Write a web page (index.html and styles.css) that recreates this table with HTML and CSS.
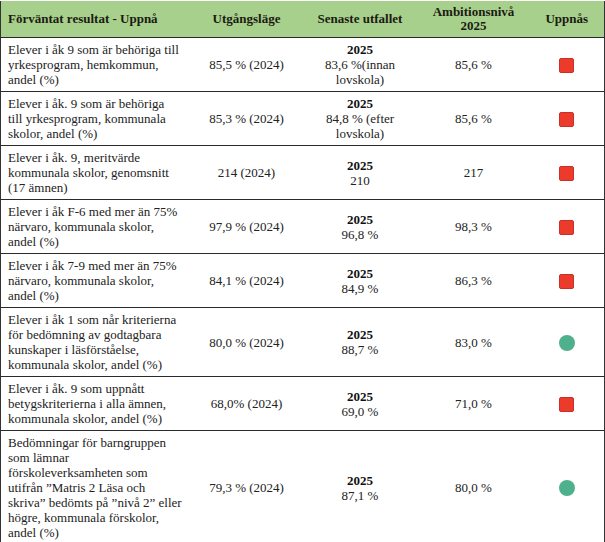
FILE: index.html
```html
<!DOCTYPE html>
<html lang="sv">
<head>
<meta charset="utf-8">
<link rel="stylesheet" href="styles.css">
</head>
<body>
<table class="results">
  <colgroup>
    <col class="c-goal"><col class="c-base"><col class="c-latest"><col class="c-amb"><col class="c-status">
  </colgroup>
  <thead>
    <tr>
      <th class="left">Förväntat resultat - Uppnå</th>
      <th>Utgångsläge</th>
      <th>Senaste utfallet</th>
      <th>Ambitionsnivå<br>2025</th>
      <th>Uppnås</th>
    </tr>
  </thead>
  <tbody>
    <tr>
      <td class="left">Elever i åk 9 som är behöriga till<br>yrkesprogram, hemkommun,<br>andel (%)</td>
      <td>85,5 % (2024)</td>
      <td><b>2025</b><br>83,6 %(innan<br>lovskola)</td>
      <td>85,6 %</td>
      <td><span class="sq"></span></td>
    </tr>
    <tr>
      <td class="left">Elever i åk. 9 som är behöriga<br>till yrkesprogram, kommunala<br>skolor, andel (%)</td>
      <td>85,3 % (2024)</td>
      <td><b>2025</b><br>84,8 % (efter<br>lovskola)</td>
      <td>85,6 %</td>
      <td><span class="sq"></span></td>
    </tr>
    <tr>
      <td class="left">Elever i åk. 9, meritvärde<br>kommunala skolor, genomsnitt<br>(17 ämnen)</td>
      <td>214 (2024)</td>
      <td><b>2025</b><br>210</td>
      <td>217</td>
      <td><span class="sq"></span></td>
    </tr>
    <tr>
      <td class="left">Elever i åk F-6 med mer än 75%<br>närvaro, kommunala skolor,<br>andel (%)</td>
      <td>97,9 % (2024)</td>
      <td><b>2025</b><br>96,8 %</td>
      <td>98,3 %</td>
      <td><span class="sq"></span></td>
    </tr>
    <tr>
      <td class="left">Elever i åk 7-9 med mer än 75%<br>närvaro, kommunala skolor,<br>andel (%)</td>
      <td>84,1 % (2024)</td>
      <td><b>2025</b><br>84,9 %</td>
      <td>86,3 %</td>
      <td><span class="sq"></span></td>
    </tr>
    <tr>
      <td class="left">Elever i åk 1 som når kriterierna<br>för bedömning av godtagbara<br>kunskaper i läsförståelse,<br>kommunala skolor, andel (%)</td>
      <td>80,0 % (2024)</td>
      <td><b>2025</b><br>88,7 %</td>
      <td>83,0 %</td>
      <td><span class="dot"></span></td>
    </tr>
    <tr>
      <td class="left">Elever i åk. 9 som uppnått<br>betygskriterierna i alla ämnen,<br>kommunala skolor, andel (%)</td>
      <td>68,0% (2024)</td>
      <td><b>2025</b><br>69,0 %</td>
      <td>71,0 %</td>
      <td><span class="sq"></span></td>
    </tr>
    <tr>
      <td class="left">Bedömningar för barngruppen<br>som lämnar<br>förskoleverksamheten som<br>utifrån ”Matris 2 Läsa och<br>skriva” bedömts på ”nivå 2” eller<br>högre, kommunala förskolor,<br>andel (%)</td>
      <td>79,3 % (2024)</td>
      <td><b>2025</b><br>87,1 %</td>
      <td>80,0 %</td>
      <td><span class="dot"></span></td>
    </tr>
  </tbody>
</table>
</body>
</html>
```
FILE: styles.css
```css
html, body {
  margin: 0;
  padding: 0;
  background: #ffffff;
}
body {
  font-family: "Liberation Serif", "DejaVu Serif", serif;
  font-size: 13px;
  color: #222222;
}
.results {
  width: 604px;
  border-collapse: collapse;
  table-layout: fixed;
  border-left: 1px solid #333333;
  border-right: 1px solid #333333;
  border-top: 1px solid #9a9a9a;
}
.c-goal { width: 190px; }
.c-base { width: 112px; }
.c-latest { width: 115px; }
.c-amb { width: 112px; }
.c-status { width: 75px; }

.results th {
  background: #a8d08d;
  font-weight: bold;
  color: #1b1b12;
  line-height: 14px;
  padding: 3px 4px 3px 4px;
  height: 30px;
  text-align: center;
  vertical-align: middle;
  border-bottom: 1px solid #2a2a2a;
  border-top: 1px solid #ffffff;
}
.results td {
  line-height: 15px;
  padding: 4px 4px;
  text-align: center;
  vertical-align: middle;
  border-bottom: 1px solid #2a2a2a;
}
.results th.left,
.results td.left {
  text-align: left;
  padding-left: 7px;
  white-space: nowrap;
}
.results td b {
  font-weight: bold;
  color: #111111;
}
.sq {
  display: inline-block;
  width: 13px;
  height: 13px;
  border-radius: 2px;
  background: #ec3a2b;
  border: 1px solid #c9302a;
  vertical-align: middle;
}
.dot {
  display: inline-block;
  width: 16px;
  height: 16px;
  border-radius: 50%;
  background: #4fb08c;
  vertical-align: middle;
}
```
